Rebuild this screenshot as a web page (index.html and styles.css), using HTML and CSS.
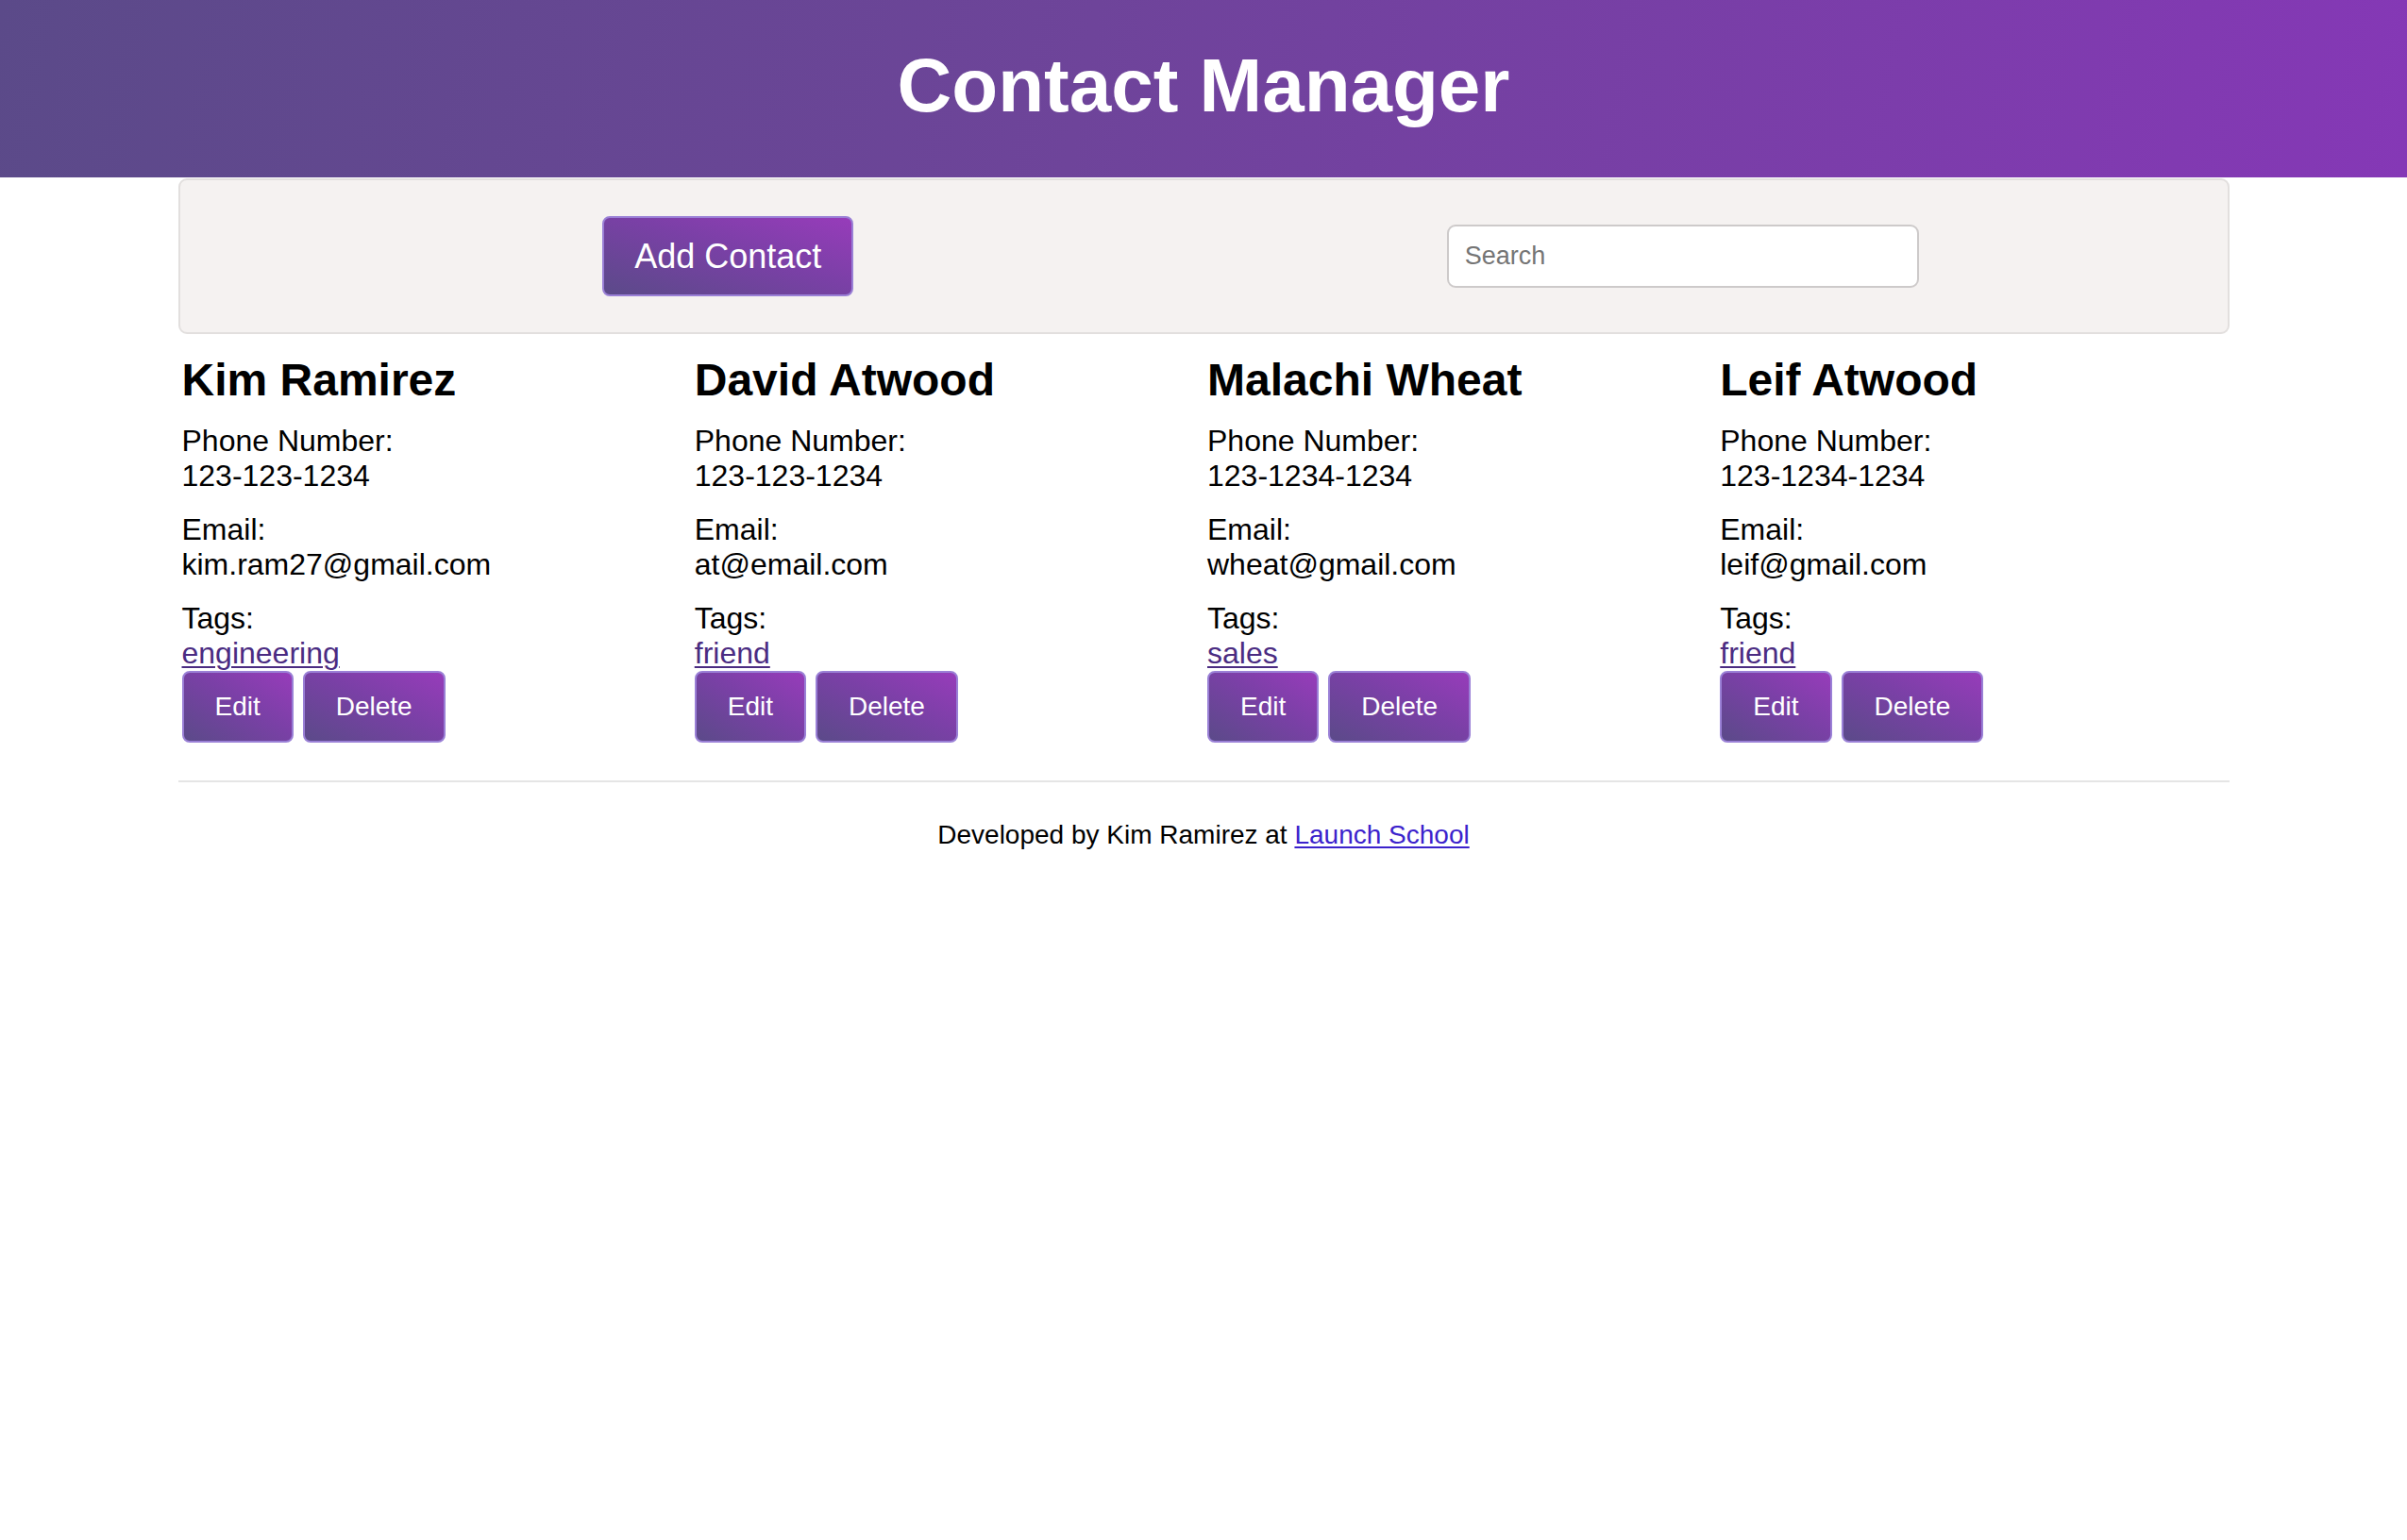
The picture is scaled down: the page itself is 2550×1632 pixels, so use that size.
FILE: index.html
```html
<!DOCTYPE html>
<html lang="en">
<head>
<meta charset="utf-8">
<title>Contact Manager</title>
<link rel="stylesheet" href="styles.css">
</head>
<body>
<header class="site-header">
  <h1 class="site-title">Contact Manager</h1>
</header>
<main class="container">
  <section class="toolbar">
    <div class="toolbar-cell">
      <button class="btn btn-large" type="button">Add Contact</button>
    </div>
    <div class="toolbar-cell">
      <input class="search" type="text" placeholder="Search">
    </div>
  </section>
  <section class="contacts">
    <article class="card">
      <h2 class="card-name">Kim Ramirez</h2>
      <div class="field"><div>Phone Number:</div><div>123-123-1234</div></div>
      <div class="field"><div>Email:</div><div>kim.ram27@gmail.com</div></div>
      <div class="field field-last"><div>Tags:</div><div><a class="tag" href="#">engineering</a></div></div>
      <div class="actions"><button class="btn" type="button">Edit</button> <button class="btn" type="button">Delete</button></div>
    </article>
    <article class="card">
      <h2 class="card-name">David Atwood</h2>
      <div class="field"><div>Phone Number:</div><div>123-123-1234</div></div>
      <div class="field"><div>Email:</div><div>at@email.com</div></div>
      <div class="field field-last"><div>Tags:</div><div><a class="tag" href="#">friend</a></div></div>
      <div class="actions"><button class="btn" type="button">Edit</button> <button class="btn" type="button">Delete</button></div>
    </article>
    <article class="card">
      <h2 class="card-name">Malachi Wheat</h2>
      <div class="field"><div>Phone Number:</div><div>123-1234-1234</div></div>
      <div class="field"><div>Email:</div><div>wheat@gmail.com</div></div>
      <div class="field field-last"><div>Tags:</div><div><a class="tag" href="#">sales</a></div></div>
      <div class="actions"><button class="btn" type="button">Edit</button> <button class="btn" type="button">Delete</button></div>
    </article>
    <article class="card">
      <h2 class="card-name">Leif Atwood</h2>
      <div class="field"><div>Phone Number:</div><div>123-1234-1234</div></div>
      <div class="field"><div>Email:</div><div>leif@gmail.com</div></div>
      <div class="field field-last"><div>Tags:</div><div><a class="tag" href="#">friend</a></div></div>
      <div class="actions"><button class="btn" type="button">Edit</button> <button class="btn" type="button">Delete</button></div>
    </article>
  </section>
  <hr class="divider">
  <footer class="site-footer">Developed by Kim Ramirez at <a class="footer-link" href="#">Launch School</a></footer>
</main>
</body>
</html>
```

FILE: styles.css
```css
* { box-sizing: border-box; }

body {
  margin: 0;
  font-family: "Liberation Sans", Arial, Helvetica, sans-serif;
  font-size: 32px;
  color: #000;
  background: #fff;
}

.site-header {
  height: 188px;
  display: flex;
  align-items: center;
  justify-content: center;
  background: linear-gradient(100deg, #5b4a89 0%, #6e449a 45%, #8538b6 100%);
}

.site-title {
  margin: 0;
  color: #fff;
  font-size: 80px;
  font-weight: bold;
  line-height: 92px;
  position: relative;
  top: -3px;
}

.container {
  width: 2173px;
  margin: 0 auto;
}

.toolbar {
  height: 165px;
  margin-top: 1px;
  padding: 0 71px 0 75px;
  display: grid;
  grid-template-columns: 1fr 1fr;
  align-items: center;
  background: #f5f2f1;
  border: 2px solid #e2dfde;
  border-radius: 9px;
}

.toolbar-cell {
  display: flex;
  justify-content: center;
}

.btn {
  font-family: "Liberation Sans", Arial, Helvetica, sans-serif;
  font-size: 28px;
  line-height: 32px;
  color: #fff;
  padding: 20px 33px;
  border: 2px solid #9a80d6;
  border-radius: 8px;
  background: linear-gradient(to top right, #5b4a89 0%, #7a40a6 55%, #973cba 100%);
  cursor: pointer;
}

.btn-large {
  font-size: 36px;
  line-height: 41px;
  width: 266px;
  height: 85px;
  padding: 0;
}

.search {
  width: 500px;
  height: 67px;
  padding: 0 17px;
  font-family: "Liberation Sans", Arial, Helvetica, sans-serif;
  font-size: 27px;
  color: #333;
  background: #fff;
  border: 2px solid #cdcaca;
  border-radius: 9px;
}

.search::placeholder { color: #757575; }

.contacts {
  display: grid;
  grid-template-columns: repeat(4, 1fr);
}

.card {
  padding-left: 4px;
}

.card-name {
  margin: 21px 0 19px;
  font-size: 48px;
  line-height: 55px;
  font-weight: bold;
}

.field {
  line-height: 37px;
  margin-bottom: 20px;
}

.field-last { margin-bottom: 0; }

.tag {
  color: #4b2c82;
  text-decoration: underline;
  text-decoration-thickness: 2px;
  text-underline-offset: 3px;
}

.actions {
  display: flex;
  gap: 10px;
}

.divider {
  margin: 40px 0 0;
  border: 0;
  height: 2px;
  background: #e5e5e5;
}

.site-footer {
  margin-top: 40px;
  text-align: center;
  font-size: 28px;
  line-height: 32px;
}

.footer-link {
  color: #3b22cc;
  text-decoration-thickness: 2px;
  text-underline-offset: 3px;
}
```
